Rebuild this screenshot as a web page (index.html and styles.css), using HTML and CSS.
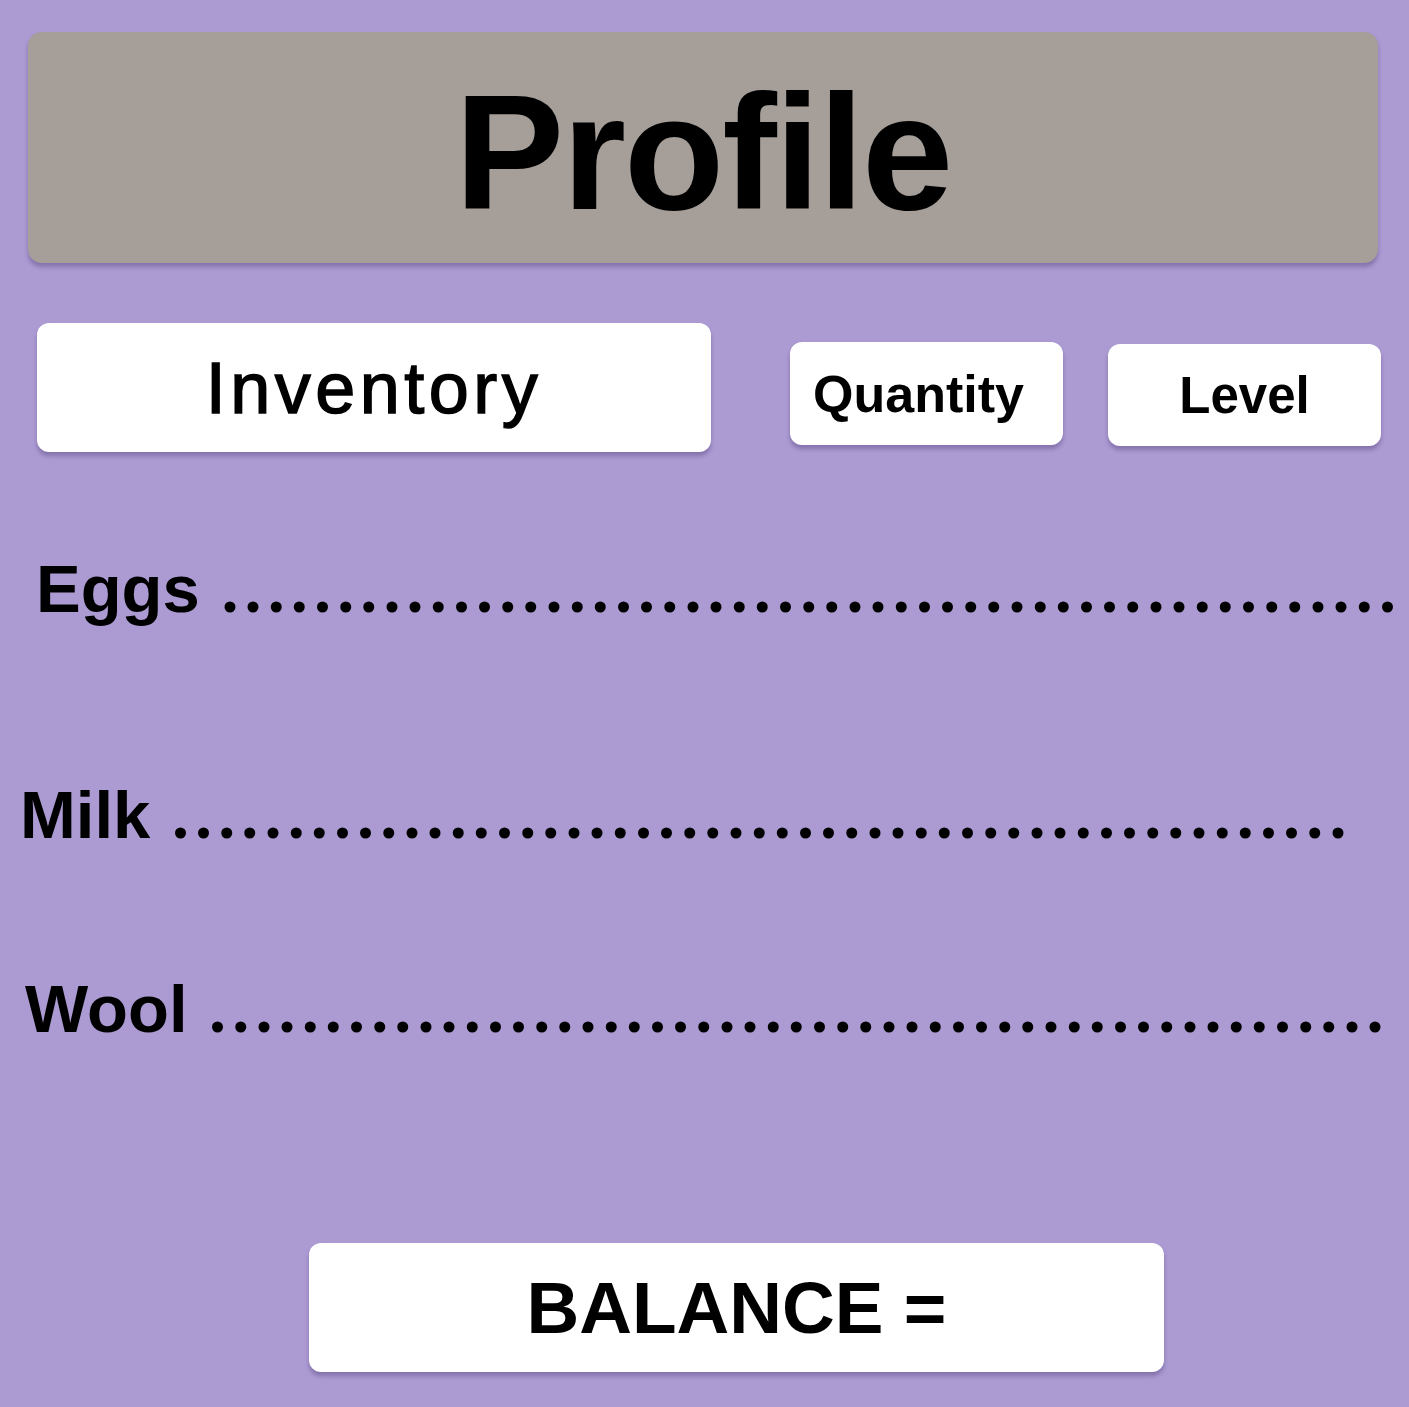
FILE: index.html
```html
<!DOCTYPE html>
<html lang="en">
<head>
    <meta charset="UTF-8">
    <meta name="viewport" content="width=device-width, initial-scale=1.0">
    <title>Profile</title>
    <link rel="stylesheet" href="styles.css">
</head>
<body>
    <div class="profile-header">
        <h1>Profile</h1>
    </div>

    <div class="tabs">
        <div class="tab tab-inventory">Inventory</div>
        <div class="tab tab-quantity">Quantity</div>
        <div class="tab tab-level">Level</div>
    </div>

    <div class="items">
        <div class="item item-eggs">Eggs <span class="dots">...................................................</span></div>
        <div class="item item-milk">Milk <span class="dots">...................................................</span></div>
        <div class="item item-wool">Wool <span class="dots">...................................................</span></div>
    </div>

    <div class="balance">BALANCE =</div>
</body>
</html>
```

FILE: styles.css
```css
* { margin: 0; padding: 0; box-sizing: border-box; }
body { font-family: "Liberation Sans", Arial, sans-serif; background: #ac9bd3; color: #000; width: 1409px; height: 1407px; overflow: hidden; }

.profile-header { margin: 32px 31px 0 28px; height: 231px; background: #a59e99; border-radius: 14px; box-shadow: 0 4px 4px rgba(60, 40, 100, 0.35); display: flex; justify-content: center; align-items: center; }
.profile-header h1 { font-size: 164px; font-weight: bold; letter-spacing: -2px; line-height: 1; padding-top: 10px; }

.tabs { display: flex; align-items: flex-start; margin: 60px 0 0 37px; }
.tab { background: #fff; border-radius: 12px; box-shadow: 0 4px 4px rgba(60, 40, 100, 0.35); display: flex; justify-content: center; align-items: center; line-height: 1; }
.tab-inventory { width: 674px; height: 129px; font-size: 72px; letter-spacing: 4.5px; -webkit-text-stroke: 1.5px #000; }
.tab-quantity { width: 273px; height: 103px; margin: 19px 0 0 79px; padding-right: 16px; font-size: 52px; font-weight: bold; }
.tab-level { width: 273px; height: 102px; margin: 21px 0 0 45px; font-size: 51px; font-weight: bold; }

.items { margin-top: 103px; }
.item { font-size: 67px; font-weight: bold; line-height: 67px; white-space: nowrap; }
.item .dots { font-family: "Liberation Serif", "Times New Roman", serif; font-size: 68px; line-height: 0; letter-spacing: 6.15px; margin-left: 3px; }
.item-eggs { margin-left: 36px; }
.item-milk { margin: 159px 0 0 20px; }
.item-wool { margin: 127px 0 0 25px; }

.balance { margin: 201px 0 0 309px; width: 855px; height: 129px; background: #fff; border-radius: 12px; box-shadow: 0 4px 4px rgba(60, 40, 100, 0.35); display: flex; justify-content: center; align-items: center; font-size: 73px; font-weight: bold; }
```
